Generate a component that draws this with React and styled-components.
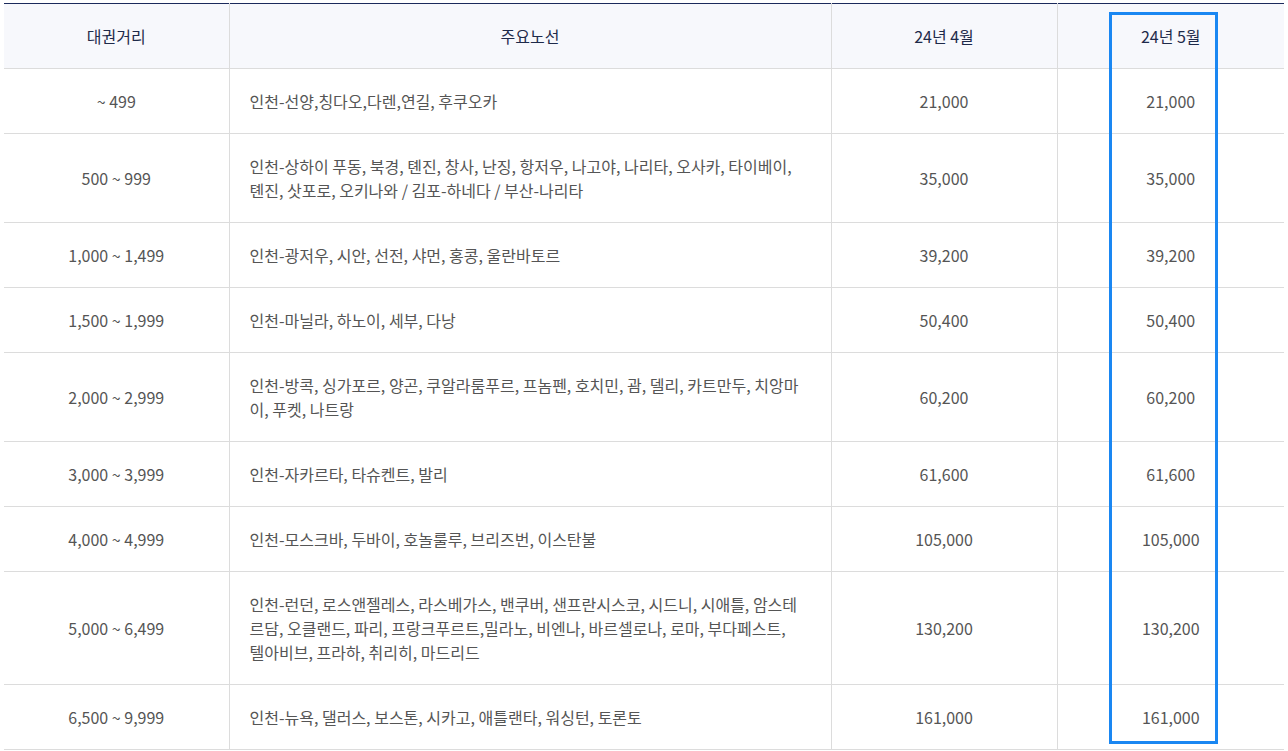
import styled, { createGlobalStyle } from "styled-components";

const GlobalStyle = createGlobalStyle`
  body {
    margin: 0;
    background: #ffffff;
    font-family: "Noto Sans CJK KR", "Noto Sans", sans-serif;
  }
`;

const rows = [
  ["~ 499", "인천-선양,칭다오,다렌,연길, 후쿠오카", "21,000", "21,000"],
  [
    "500 ~ 999",
    "인천-상하이 푸동, 북경, 톈진, 창사, 난징, 항저우, 나고야, 나리타, 오사카, 타이베이, 톈진, 삿포로, 오키나와 / 김포-하네다 / 부산-나리타",
    "35,000",
    "35,000",
  ],
  ["1,000 ~ 1,499", "인천-광저우, 시안, 선전, 샤먼, 홍콩, 울란바토르", "39,200", "39,200"],
  ["1,500 ~ 1,999", "인천-마닐라, 하노이, 세부, 다낭", "50,400", "50,400"],
  [
    "2,000 ~ 2,999",
    "인천-방콕, 싱가포르, 양곤, 쿠알라룸푸르, 프놈펜, 호치민, 괌, 델리, 카트만두, 치앙마이, 푸켓, 나트랑",
    "60,200",
    "60,200",
  ],
  ["3,000 ~ 3,999", "인천-자카르타, 타슈켄트, 발리", "61,600", "61,600"],
  ["4,000 ~ 4,999", "인천-모스크바, 두바이, 호놀룰루, 브리즈번, 이스탄불", "105,000", "105,000"],
  [
    "5,000 ~ 6,499",
    "인천-런던, 로스앤젤레스, 라스베가스, 밴쿠버, 샌프란시스코, 시드니, 시애틀, 암스테르담, 오클랜드, 파리, 프랑크푸르트,밀라노, 비엔나, 바르셀로나, 로마, 부다페스트, 텔아비브, 프라하, 취리히, 마드리드",
    "130,200",
    "130,200",
  ],
  ["6,500 ~ 9,999", "인천-뉴욕, 댈러스, 보스톤, 시카고, 애틀랜타, 워싱턴, 토론토", "161,000", "161,000"],
];

function App() {
  return (
    <>
      <GlobalStyle />
      <Wrap>
        <Table>
          <colgroup>
            <col style={{ width: 225 }} />
            <col style={{ width: 602 }} />
            <col style={{ width: 226 }} />
            <col style={{ width: 227 }} />
          </colgroup>
          <thead>
            <tr>
              <Th>대권거리</Th>
              <Th>주요노선</Th>
              <Th>24년 4월</Th>
              <Th>24년 5월</Th>
            </tr>
          </thead>
          <tbody>
            {rows.map((r) => (
              <tr key={r[0]}>
                <Td>{r[0]}</Td>
                <Td $left>{r[1]}</Td>
                <Td>{r[2]}</Td>
                <Td>{r[3]}</Td>
              </tr>
            ))}
          </tbody>
        </Table>
        <Highlight />
      </Wrap>
    </>
  );
}

export default App;

const Wrap = styled.div`
  position: relative;
  padding: 3px 4px 0 4px;
  width: 1280px;
`;

const Table = styled.table`
  width: 1280px;
  border-collapse: collapse;
  table-layout: fixed;
  border-top: 1px solid #1b2a5c;
  font-size: 16px;
  line-height: 24px;
`;

const Th = styled.th`
  height: 64px;
  padding: 0 20px;
  background: #f7f8fc;
  color: #1e2a4a;
  font-weight: 400;
  text-align: center;
  border-bottom: 1px solid #dcdcdc;
  border-left: 1px solid #dcdcdc;

  &:first-child {
    border-left: none;
  }
`;

const Td = styled.td`
  padding: 20px ${(p) => (p.$left ? "30px" : "20px")} 20px 20px;
  color: #555555;
  text-align: ${(p) => (p.$left ? "left" : "center")};
  border-bottom: 1px solid #dcdcdc;
  border-left: 1px solid #dcdcdc;
  vertical-align: middle;

  &:first-child {
    border-left: none;
  }
`;

const Highlight = styled.div`
  position: absolute;
  left: 1109px;
  top: 12px;
  width: 109px;
  height: 732px;
  box-sizing: border-box;
  border: 3px solid #1a87f2;
  pointer-events: none;
`;
